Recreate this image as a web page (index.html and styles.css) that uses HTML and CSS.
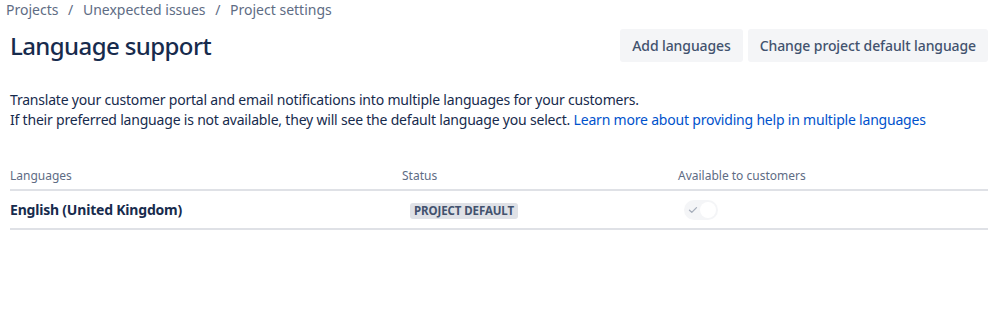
FILE: index.html
```html
<!DOCTYPE html>
<html lang="en">
<head>
    <meta charset="UTF-8">
    <title>Language support</title>
    <link rel="stylesheet" href="styles.css">
</head>
<body>
    <!-- Breadcrumbs -->
    <nav class="breadcrumbs">
        <a href="#">Projects</a>
        <span class="sep">/</span>
        <a href="#">Unexpected issues</a>
        <span class="sep">/</span>
        <a href="#">Project settings</a>
    </nav>

    <!-- Page header with actions -->
    <div class="page-header">
        <h1>Language support</h1>
        <div class="actions">
            <button>Add languages</button>
            <button>Change project default language</button>
        </div>
    </div>

    <p class="description">
        Translate your customer portal and email notifications into multiple languages for your customers.<br>
        If their preferred language is not available, they will see the default language you select.
        <a href="#">Learn more about providing help in multiple languages</a>
    </p>

    <table class="languages">
        <thead>
            <tr>
                <th class="col-lang">Languages</th>
                <th class="col-status">Status</th>
                <th class="col-avail">Available to customers</th>
            </tr>
        </thead>
        <tbody>
            <tr>
                <td class="lang-name">English (United Kingdom)</td>
                <td><span class="lozenge">Project default</span></td>
                <td>
                    <span class="toggle">
                        <svg class="check" width="10" height="10" viewBox="0 0 10 10">
                            <path d="M1.5 5.2 L3.8 7.4 L8.5 2.6" fill="none" stroke="#a5adba" stroke-width="1.3" stroke-linecap="round" stroke-linejoin="round"/>
                        </svg>
                        <span class="knob"></span>
                    </span>
                </td>
            </tr>
        </tbody>
    </table>
</body>
</html>
```

FILE: styles.css
```css
body {
    font-family: 'Noto Sans', sans-serif;
    margin: 0;
    padding: 0 11px 0 10px;
    background-color: #fff;
    color: #172b4d;
    font-size: 14px;
    letter-spacing: -0.2px;
}

.breadcrumbs {
    margin-left: -4px;
    line-height: 19px;
    font-size: 14px;
    letter-spacing: 0;
}

.breadcrumbs a {
    color: #5e6c84;
    text-decoration: none;
}

.breadcrumbs .sep {
    color: #5e6c84;
    padding: 0 6px;
}

.page-header {
    display: flex;
    justify-content: space-between;
    align-items: flex-start;
    margin-top: 10px;
}

h1 {
    font-size: 24px;
    font-weight: 500;
    line-height: 28px;
    margin: 0;
    padding-top: 3px;
    color: #172b4d;
    letter-spacing: -0.6px;
}

.actions {
    display: flex;
    gap: 5px;
}

button {
    font-family: inherit;
    font-size: 14px;
    font-weight: 500;
    height: 33px;
    padding: 0 12px;
    background-color: #f4f5f7;
    color: #42526e;
    border: none;
    border-radius: 3px;
    cursor: pointer;
    letter-spacing: -0.1px;
}

.description {
    margin: 28px 0 0;
    line-height: 20px;
}

.description a {
    color: #0052cc;
    text-decoration: none;
}

.languages {
    width: 100%;
    border-collapse: collapse;
    margin-top: 33px;
    letter-spacing: 0;
}

.languages th {
    font-size: 12px;
    font-weight: 400;
    color: #5e6c84;
    text-align: left;
    padding: 4px 0 5px;
    border-bottom: 2px solid #dfe1e6;
}

.col-lang {
    width: 392px;
}

.col-status {
    width: 276px;
}

.languages td {
    padding: 8px 0;
    height: 21px;
    border-bottom: 2px solid #dfe1e6;
    vertical-align: middle;
}

.lang-name {
    font-weight: 700;
    letter-spacing: -0.2px;
}

.lozenge {
    display: inline-block;
    margin-left: 8px;
    padding: 0 4px;
    background-color: #dfe1e6;
    color: #42526e;
    border-radius: 3px;
    font-size: 11.5px;
    font-weight: 700;
    line-height: 16px;
    text-transform: uppercase;
    letter-spacing: -0.1px;
}

.toggle {
    display: inline-flex;
    align-items: center;
    justify-content: space-between;
    margin-left: 6px;
    width: 34px;
    height: 20px;
    padding: 0 2px 0 4px;
    box-sizing: border-box;
    background-color: #f4f5f7;
    border-radius: 10px;
    vertical-align: middle;
}

.knob {
    width: 16px;
    height: 16px;
    border-radius: 50%;
    background-color: #fff;
}
```
